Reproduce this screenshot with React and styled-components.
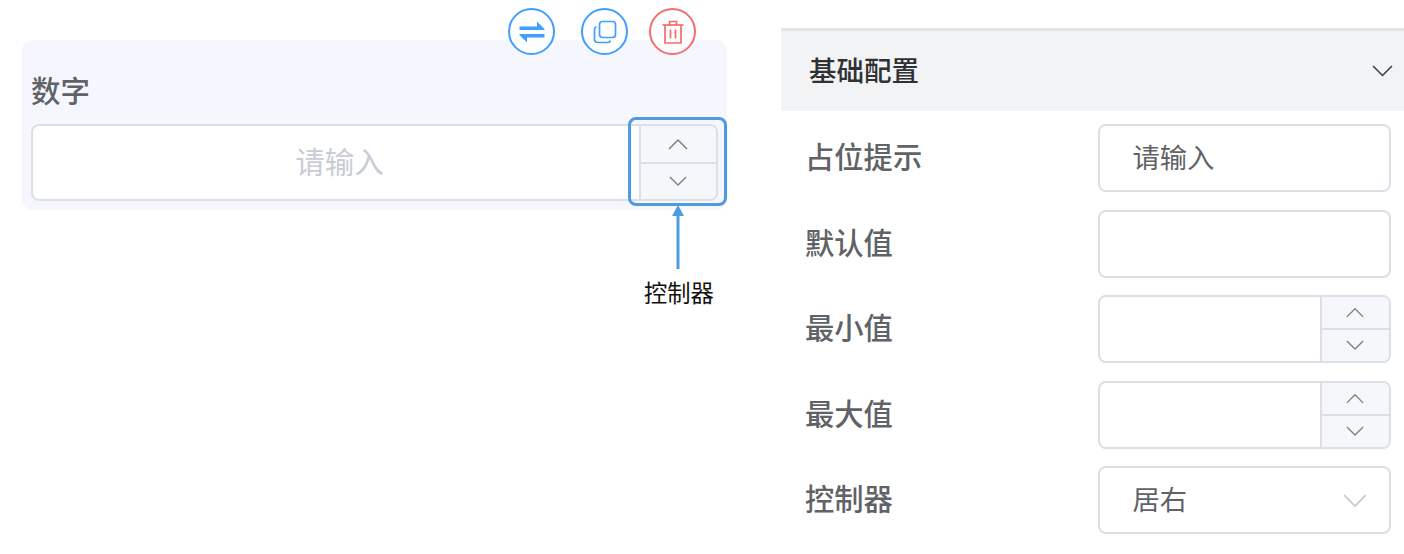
import React from 'react';
import styled, { createGlobalStyle } from 'styled-components';

const GlobalStyle = createGlobalStyle`
  html, body {
    margin: 0;
    padding: 0;
    background: #fff;
    font-family: "Noto Sans CJK SC", "Noto Sans", sans-serif;
  }
`;

const Chevron = ({ up, size = 20, color = '#7d8088', width = 1.5 }) => (
  <svg width={size} height={size * 0.6} viewBox="0 0 20 12" fill="none">
    <path
      d={up ? 'M1 11L10 2L19 11' : 'M1 1L10 10L19 1'}
      stroke={color}
      strokeWidth={width}
    />
  </svg>
);

const Stepper = ({ wide }) => (
  <StepperBox $wide={wide}>
    <StepButton>
      <Chevron up size={wide ? 20 : 18} />
    </StepButton>
    <StepButton>
      <Chevron size={18} />
    </StepButton>
  </StepperBox>
);

function App() {
  return (
    <Page>
      <GlobalStyle />
      <Canvas>
        <Card>
          <CardLabel>数字</CardLabel>
          <NumberInput>
            <Placeholder>请输入</Placeholder>
            <Stepper wide />
          </NumberInput>
        </Card>

        <Toolbar>
          <RoundButton $left={508}>
            <svg width="26" height="22" viewBox="0 0 26 22" fill="#409eff">
              <path d="M0.5 5.5H18V0.5L25.5 8V9H0.5Z" />
              <path d="M25.5 16.5H8V21.5L0.5 14V13H25.5Z" />
            </svg>
          </RoundButton>
          <RoundButton $left={581}>
            <svg width="26" height="26" viewBox="0 0 26 26" fill="none" stroke="#409eff" strokeWidth="1.7">
              <rect x="7.5" y="2.5" width="16" height="16" rx="3" />
              <path d="M4.5 7.5C3 8 2.5 9 2.5 10.5V20C2.5 22 4 23.5 6 23.5H15.5C17 23.5 18 23 18.5 21.5" />
            </svg>
          </RoundButton>
          <RoundButton $left={649} $danger>
            <svg width="24" height="26" viewBox="0 0 24 26" fill="none" stroke="#f56c6c" strokeWidth="1.7">
              <path d="M1.5 6H22.5" />
              <path d="M8.5 6V2.5H15.5V6" />
              <path d="M4 6V24H20V6" />
              <path d="M9.5 10.5V19.5M14.5 10.5V19.5" />
            </svg>
          </RoundButton>
        </Toolbar>

        <Highlight />
        <Arrow>
          <svg width="12" height="64" viewBox="0 0 12 64">
            <path d="M6 0L12 11H0Z" fill="#4f9be0" />
            <rect x="4.5" y="10" width="3" height="54" fill="#4f9be0" />
          </svg>
        </Arrow>
        <Annotation>控制器</Annotation>
      </Canvas>

      <Panel>
        <PanelHeader>
          <HeaderTitle>基础配置</HeaderTitle>
          <Chevron size={21} color="#3c3f46" width={1.5} />
        </PanelHeader>
        <Rows>
          <Row>
            <RowLabel>占位提示</RowLabel>
            <Field>
              <FieldText>请输入</FieldText>
            </Field>
          </Row>
          <Row>
            <RowLabel>默认值</RowLabel>
            <Field />
          </Row>
          <Row>
            <RowLabel>最小值</RowLabel>
            <Field>
              <Stepper />
            </Field>
          </Row>
          <Row>
            <RowLabel>最大值</RowLabel>
            <Field>
              <Stepper />
            </Field>
          </Row>
          <Row>
            <RowLabel>控制器</RowLabel>
            <Field>
              <FieldText>居右</FieldText>
              <SelectArrow>
                <Chevron size={24} color="#c6c9d0" width={1.4} />
              </SelectArrow>
            </Field>
          </Row>
        </Rows>
      </Panel>
    </Page>
  );
}

const Page = styled.div`
  display: flex;
  width: 1404px;
  height: 554px;
  overflow: hidden;
`;

const Canvas = styled.div`
  position: relative;
  flex: 0 0 781px;
  padding: 40px 54px 0 22px;
  box-sizing: border-box;
`;

const Card = styled.div`
  height: 170px;
  box-sizing: border-box;
  padding: 25px 9px 0;
  background: #f6f7fe;
  border-radius: 11px;
`;

const CardLabel = styled.div`
  height: 48px;
  margin-bottom: 11px;
  line-height: 48px;
  font-size: 29.5px;
  font-weight: 500;
  color: #606266;
`;

const NumberInput = styled.div`
  display: flex;
  justify-content: center;
  align-items: center;
  position: relative;
  height: 77px;
  box-sizing: border-box;
  background: #fff;
  border: 2px solid #dcdfe6;
  border-radius: 8px;
  padding-right: 70px;
  overflow: hidden;
`;

const Placeholder = styled.span`
  font-size: 29.5px;
  color: #c8ccd4;
  padding-bottom: 5px;
`;

const StepperBox = styled.div`
  position: absolute;
  top: 0;
  right: 0;
  bottom: 0;
  width: ${(p) => (p.$wide ? '75px' : '67px')};
  display: flex;
  flex-direction: column;
  background: #f5f7fa;
  border-left: 2px solid #dcdfe6;
`;

const StepButton = styled.div`
  flex: 1;
  display: flex;
  align-items: center;
  justify-content: center;
  padding-right: 2px;
  & + & {
    border-top: 2px solid #dcdfe6;
  }
`;

const Toolbar = styled.div`
  position: absolute;
  top: 0;
  left: 0;
`;

const RoundButton = styled.div`
  position: absolute;
  top: 8px;
  left: ${(p) => p.$left}px;
  width: 47px;
  height: 47px;
  box-sizing: border-box;
  display: flex;
  align-items: center;
  justify-content: center;
  background: #fff;
  border-radius: 50%;
  border: 2px solid ${(p) => (p.$danger ? '#f56c6c' : '#409eff')};
`;

const Highlight = styled.div`
  position: absolute;
  left: 628px;
  top: 117px;
  width: 99px;
  height: 89px;
  box-sizing: border-box;
  border: 3px solid #4f9be0;
  border-radius: 8px;
`;

const Arrow = styled.div`
  position: absolute;
  left: 671.5px;
  top: 205px;
  line-height: 0;
`;

const Annotation = styled.div`
  position: absolute;
  left: 644px;
  top: 275px;
  font-size: 23.3px;
  line-height: 34px;
  color: #111;
`;

const Panel = styled.div`
  flex: 1;
`;

const PanelHeader = styled.div`
  display: flex;
  align-items: center;
  justify-content: space-between;
  height: 83px;
  margin-top: 28px;
  padding: 0 11px 0 28px;
  box-sizing: border-box;
  background: #f2f3f5;
  border-top: 3px solid #e2e4ea;
`;

const HeaderTitle = styled.span`
  font-size: 27.5px;
  font-weight: 500;
  color: #303133;
  padding-bottom: 5px;
`;

const Rows = styled.div`
  display: flex;
  flex-direction: column;
  gap: 17.6px;
  padding: 13px 13px 0 24px;
`;

const Row = styled.div`
  display: flex;
  align-items: center;
  justify-content: space-between;
  height: 68px;
`;

const RowLabel = styled.div`
  font-size: 29.3px;
  font-weight: 500;
  color: #606266;
  padding-bottom: 6px;
`;

const Field = styled.div`
  position: relative;
  display: flex;
  align-items: center;
  width: 293px;
  height: 68px;
  box-sizing: border-box;
  padding-left: 32.5px;
  border: 2px solid #dcdfe6;
  border-radius: 8px;
  overflow: hidden;
`;

const FieldText = styled.span`
  font-size: 27.3px;
  color: #606266;
  padding-bottom: 4px;
`;

const SelectArrow = styled.div`
  position: absolute;
  right: 22px;
  top: 26px;
  line-height: 0;
`;

export default App;
